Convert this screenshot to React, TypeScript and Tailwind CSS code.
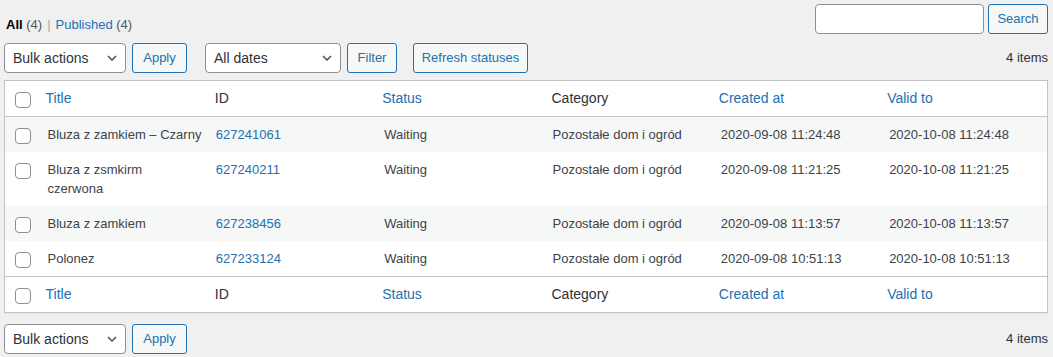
import React from "react";

type Row = {
	id: string;
	title: string[];
	status: string;
	category: string;
	created: string;
	valid: string;
};

const rows: Row[] = [
	{
		id: "627241061",
		title: ["Bluza z zamkiem – Czarny"],
		status: "Waiting",
		category: "Pozostałe dom i ogród",
		created: "2020-09-08 11:24:48",
		valid: "2020-10-08 11:24:48",
	},
	{
		id: "627240211",
		title: ["Bluza z zsmkirm", "czerwona"],
		status: "Waiting",
		category: "Pozostałe dom i ogród",
		created: "2020-09-08 11:21:25",
		valid: "2020-10-08 11:21:25",
	},
	{
		id: "627238456",
		title: ["Bluza z zamkiem"],
		status: "Waiting",
		category: "Pozostałe dom i ogród",
		created: "2020-09-08 11:13:57",
		valid: "2020-10-08 11:13:57",
	},
	{
		id: "627233124",
		title: ["Polonez"],
		status: "Waiting",
		category: "Pozostałe dom i ogród",
		created: "2020-09-08 10:51:13",
		valid: "2020-10-08 10:51:13",
	},
];

const columns = [
	{ key: "title", label: "Title", sortable: true },
	{ key: "id", label: "ID", sortable: false },
	{ key: "status", label: "Status", sortable: true },
	{ key: "category", label: "Category", sortable: false },
	{ key: "created", label: "Created at", sortable: true },
	{ key: "valid", label: "Valid to", sortable: true },
];

const Checkbox = () => (
	<span className="block w-4 h-4 rounded-[4px] border border-[#8c8f94] bg-white" />
);

const Chevron = () => (
	<svg width="10" height="6" viewBox="0 0 10 6" className="shrink-0">
		<path d="M1 1l4 4 4-4" fill="none" stroke="#50575e" strokeWidth="1.6" />
	</svg>
);

const Select = ({ label, width }: { label: string; width: string }) => (
	<div
		className={`flex items-center justify-between h-[30px] ${width} pl-2 pr-2 rounded-[4px] border border-[#8c8f94] bg-white text-[14px] text-[#2c3338]`}
	>
		<span>{label}</span>
		<Chevron />
	</div>
);

const Button = ({ label, width }: { label: string; width: string }) => (
	<button
		className={`flex items-center justify-center h-[30px] ${width} rounded-[3px] border border-[#2271b1] bg-[#f6f7f7] text-[13px] text-[#2271b1] whitespace-nowrap`}
	>
		{label}
	</button>
);

const HeaderRow = ({ position }: { position: "head" | "foot" }) => (
	<tr
		className={
			position === "head"
				? "border-b border-[#c3c4c7]"
				: "border-t border-[#c3c4c7]"
		}
	>
		<th className="pl-[10px] pt-[11px] align-top">
			<Checkbox />
		</th>
		{columns.map((col) =>
			col.sortable ? (
				<th key={col.key} className="p-0 text-left font-normal">
					<a className="block p-2 text-[14px] leading-[19px] text-[#2271b1]">
						{col.label}
					</a>
				</th>
			) : (
				<th
					key={col.key}
					className="px-[9px] py-2 text-left font-normal text-[14px] leading-[19px] text-[#2c3338]"
				>
					{col.label}
				</th>
			)
		)}
	</tr>
);

const BulkNav = () => (
	<div className="flex items-center gap-[6px]">
		<Select label="Bulk actions" width="w-[122px]" />
		<Button label="Apply" width="w-[55px]" />
	</div>
);

const cell = "px-[10px] py-2 align-top leading-[19px]";

export default function App() {
	return (
		<div className="min-h-[357px] bg-[#f0f0f1] pl-1 pr-[5px] pt-1 font-['Liberation_Sans',Arial,sans-serif] text-[13px] text-[#3c434a]">
			{/* Views + search */}
			<div className="flex items-start justify-between">
				<ul className="flex items-center mt-[11px] ml-[2px] text-[13px] leading-5 text-[#50575e]">
					<li>
						<span className="font-semibold text-black">All</span> (4)
						<span className="mx-[5px] text-[#a7aaad]">|</span>
					</li>
					<li>
						<a className="text-[#2271b1]">Published</a> (4)
					</li>
				</ul>
				<div className="flex items-center gap-1">
					<div className="w-[169px] h-[30px] rounded-[4px] border border-[#8c8f94] bg-white" />
					<Button label="Search" width="w-[60px]" />
				</div>
			</div>

			{/* Top tablenav */}
			<div className="flex items-center justify-between mt-[8px]">
				<div className="flex items-center">
					<BulkNav />
					<div className="flex items-center gap-[6px] ml-[18px]">
						<Select label="All dates" width="w-[136px]" />
						<Button label="Filter" width="w-[50px]" />
					</div>
					<div className="ml-4">
						<Button label="Refresh statuses" width="w-[115px]" />
					</div>
				</div>
				<span className="text-[13px] text-[#2c3338]">4 items</span>
			</div>

			{/* Table */}
			<table className="w-full mt-[7px] table-fixed border-collapse border border-[#c3c4c7] bg-white shadow-[0_1px_1px_rgba(0,0,0,0.04)]">
				<colgroup>
					<col className="w-[33px]" />
					<col />
					<col />
					<col />
					<col />
					<col />
					<col />
				</colgroup>
				<thead>
					<HeaderRow position="head" />
				</thead>
				<tbody>
					{rows.map((row, i) => (
						<tr key={row.id} className={i % 2 === 0 ? "bg-[#f6f7f7]" : "bg-white"}>
							<td className="pl-[10px] pt-[11px] align-top">
								<Checkbox />
							</td>
							<td className={`${cell} whitespace-nowrap`}>
								{row.title.map((line) => (
									<div key={line}>{line}</div>
								))}
							</td>
							<td className={cell}>
								<a className="text-[#2271b1]">{row.id}</a>
							</td>
							<td className={cell}>{row.status}</td>
							<td className={cell}>{row.category}</td>
							<td className={cell}>{row.created}</td>
							<td className={cell}>{row.valid}</td>
						</tr>
					))}
				</tbody>
				<tfoot>
					<HeaderRow position="foot" />
				</tfoot>
			</table>

			{/* Bottom tablenav */}
			<div className="flex items-center justify-between mt-[11px] pb-1">
				<BulkNav />
				<span className="text-[13px] text-[#2c3338]">4 items</span>
			</div>
		</div>
	);
}
